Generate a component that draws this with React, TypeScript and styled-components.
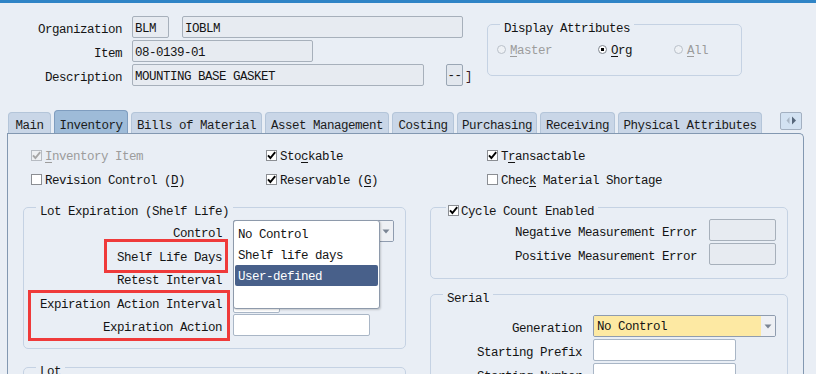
import React from 'react';
import styled, { createGlobalStyle } from 'styled-components';

const PAGE = '#e9eef5';

const GlobalStyle = createGlobalStyle`
  html, body { margin: 0; padding: 0; background: ${PAGE}; }
  body {
    font-family: "Liberation Mono", "DejaVu Sans Mono", monospace;
    font-size: 12.5px;
    letter-spacing: -0.5px;
    color: #141414;
  }
  * { box-sizing: border-box; }
`;

const Screen = styled.div`
  width: 816px;
  height: 374px;
  overflow: hidden;
  background: ${PAGE};
`;

const TopBar = styled.div`
  height: 3px;
  background: #2f84c6;
`;

// header: org / item / description + display attributes
const Header = styled.header`
  display: flex;
  align-items: flex-start;
  height: 107px;
  padding-top: 13px;
`;

const FormGrid = styled.div`
  display: grid;
  grid-template-columns: 122px auto;
  grid-auto-rows: 22px;
  column-gap: 10px;
  row-gap: 2px;
  align-items: center;
  width: 470px;
`;

const Label = styled.span`
  height: 22px;
  padding-top: 5px;
  line-height: 18px;
  text-align: right;
  white-space: nowrap;
`;

const FieldRow = styled.div<{ $gap?: number }>`
  display: flex;
  align-items: center;
  gap: ${p => p.$gap ?? 0}px;
`;

const Field = styled.div<{ $w: number; $tone?: 'read' | 'white' }>`
  width: ${p => p.$w}px;
  height: 22px;
  padding: 3px 2px 0;
  line-height: 19px;
  white-space: nowrap;
  overflow: hidden;
  border: 1px solid ${p => (p.$tone === 'white' ? '#a9b6c6' : '#a7b0bb')};
  border-radius: 2px;
  background: ${p => (p.$tone === 'white' ? '#ffffff' : '#e7ebf1')};
`;

const DotButton = styled.div`
  width: 17px;
  height: 22px;
  padding-top: 3px;
  line-height: 17px;
  text-align: center;
  border: 1px solid #9aa6b4;
  border-radius: 2px;
  background: #e2e7ee;
`;

const Bracket = styled.span`
  margin-left: 2px;
  padding-top: 4px;
  color: #3a1c24;
`;

// group boxes with a title sitting on the top border
const GroupBox = styled.section<{ $w?: number; $h?: number; $pb?: number }>`
  position: relative;
  width: ${p => (p.$w ? `${p.$w}px` : 'auto')};
  height: ${p => (p.$h ? `${p.$h}px` : 'auto')};
  padding-bottom: ${p => p.$pb ?? 0}px;
  border: 1px solid #c5d2e3;
  border-radius: 5px;
`;

const GroupTitle = styled.div<{ $ml?: number; $pl?: number }>`
  display: flex;
  align-items: center;
  gap: 2px;
  width: max-content;
  margin: -3px 0 0 ${p => p.$ml ?? 12}px;
  padding: 0 4px 0 ${p => p.$pl ?? 4}px;
  line-height: 14px;
  background: ${PAGE};
  white-space: nowrap;
`;

const DisplayBox = styled(GroupBox)`
  margin: 8px 0 0 17px;
`;

const RadioRow = styled.div`
  display: grid;
  grid-template-columns: 101px 76px auto;
  margin-top: 8px;
  padding-left: 9px;
  line-height: 14px;
`;

const RadioItem = styled.label<{ $disabled?: boolean }>`
  display: flex;
  align-items: center;
  gap: 4px;
  color: ${p => (p.$disabled ? '#9c9c9c' : '#141414')};
`;

const RadioDot = styled.span<{ $on?: boolean; $disabled?: boolean }>`
  position: relative;
  width: 9px;
  height: 9px;
  margin-top: -3px;
  border-radius: 50%;
  border: 1px solid ${p => (p.$disabled ? '#b9c0c9' : '#7e858e')};
  background: ${p => (p.$disabled ? '#eef1f5' : '#ffffff')};
  &::after {
    content: '';
    display: ${p => (p.$on ? 'block' : 'none')};
    position: absolute;
    left: 2px;
    top: 2px;
    width: 3px;
    height: 3px;
    background: #000;
  }
`;

const Hot = styled.u`
  text-underline-offset: 2px;
`;

// tabs
const TabStrip = styled.nav`
  display: flex;
  align-items: flex-end;
  gap: 3px;
  height: 23px;
  padding-left: 8px;
`;

const Tab = styled.div<{ $w: number; $active?: boolean }>`
  width: ${p => p.$w}px;
  height: ${p => (p.$active ? 23 : 21)}px;
  padding-top: ${p => (p.$active ? 7 : 5)}px;
  line-height: 16px;
  text-align: center;
  white-space: nowrap;
  border: 1px solid ${p => (p.$active ? '#7f9dbf' : '#b4c5d9')};
  border-bottom: 0;
  border-radius: 4px 4px 0 0;
  background: ${p => (p.$active ? '#9ebbd8' : '#c9d6e7')};
  color: #1b1b1b;
`;

const ScrollBtn = styled.div`
  display: flex;
  margin: 0 14px 3px auto;
  width: 22px;
  height: 18px;
  border: 1px solid #a3b0c1;
  border-radius: 2px;
  background: #d3e2f2;
`;

// main panel
const Panel = styled.main`
  margin-left: 7px;
  width: 797px;
  height: 241px;
  overflow: hidden;
  padding: 9px 0 0 15px;
  border: 1px solid #8398b1;
  border-bottom: 0;
  border-top-right-radius: 5px;
`;

const CheckGrid = styled.div`
  display: grid;
  grid-template-columns: 235px 221px auto;
  grid-auto-rows: 24px;
  align-items: center;
  padding-left: 8px;
`;

const CheckItem = styled.label<{ $disabled?: boolean }>`
  display: flex;
  align-items: center;
  gap: 3px;
  padding-top: 3px;
  white-space: nowrap;
  color: ${p => (p.$disabled ? '#9c9c9c' : '#141414')};
`;

const Box = styled.span<{ $disabled?: boolean }>`
  display: flex;
  align-items: center;
  justify-content: center;
  width: 11px;
  height: 11px;
  margin-top: -3px;
  border: 1px solid ${p => (p.$disabled ? '#b6bbc2' : '#8b8e93')};
  background: ${p => (p.$disabled ? '#eef0f3' : '#ffffff')};
`;

const Columns = styled.div`
  display: grid;
  grid-template-columns: 383px 358px;
  column-gap: 24px;
  align-items: start;
  margin-top: 16px;
`;

const Column = styled.div<{ $gap: number }>`
  display: flex;
  flex-direction: column;
  gap: ${p => p.$gap}px;
`;

const FormRows = styled.div<{ $label: number; $gap: number; $row: number; $mt: number }>`
  display: grid;
  grid-template-columns: ${p => p.$label}px auto;
  column-gap: ${p => p.$gap}px;
  row-gap: ${p => p.$row}px;
  grid-auto-rows: 22px;
  align-items: center;
  margin-top: ${p => p.$mt}px;
`;

const Cell = styled.div`
  position: relative;
  display: flex;
`;

const Select = styled.div<{ $w: number }>`
  display: flex;
  width: ${p => p.$w}px;
  height: 22px;
  overflow: hidden;
  border: 1px solid #8f9caf;
  border-radius: 2px;
`;

const SelectValue = styled.span<{ $fill: string }>`
  flex: 1;
  padding: 3px 3px 0;
  line-height: 17px;
  background: ${p => p.$fill};
  white-space: nowrap;
`;

const SelectArrow = styled.span`
  display: flex;
  align-items: center;
  justify-content: center;
  width: 14px;
  background: #eef0f4;
`;

const DropList = styled.ul`
  position: absolute;
  left: 0;
  top: 0;
  z-index: 3;
  width: 147px;
  height: 89px;
  margin: 0;
  padding: 2px 1px 0;
  list-style: none;
  background: #ffffff;
  border: 1px solid #8e9aab;
  border-radius: 3px;
  box-shadow: 1px 1px 2px rgba(0, 0, 0, 0.18);
`;

const DropItem = styled.li<{ $selected?: boolean }>`
  height: 21px;
  padding: 4px 3px 0;
  line-height: 17px;
  border-radius: 2px;
  white-space: nowrap;
  color: ${p => (p.$selected ? '#ffffff' : '#141414')};
  background: ${p => (p.$selected ? '#48608a' : 'transparent')};
`;

// red annotation frames drawn over the screenshot
const Callout = styled.div`
  position: absolute;
  z-index: 2;
  border: 3px solid #ef3a3a;
  pointer-events: none;
`;

function Check({ on, disabled }: { on?: boolean; disabled?: boolean }) {
  return (
    <Box $disabled={disabled}>
      {on && (
        <svg width="9" height="9" viewBox="0 0 9 9">
          <path d="M1 4.3 L3.4 7 L8.2 1.2" fill="none" stroke={disabled ? '#a7a7a7' : '#000'} strokeWidth="1.9" />
        </svg>
      )}
    </Box>
  );
}

function Arrow() {
  return (
    <svg width="8" height="5" viewBox="0 0 8 5">
      <path d="M0.5 0.5 H7.5 L4 4.5 Z" fill="#7b8594" />
    </svg>
  );
}

const tabs = [
  { name: 'Main', w: 43 },
  { name: 'Inventory', w: 74, active: true },
  { name: 'Bills of Material', w: 131 },
  { name: 'Asset Management', w: 124 },
  { name: 'Costing', w: 62 },
  { name: 'Purchasing', w: 80 },
  { name: 'Receiving', w: 75 },
  { name: 'Physical Attributes', w: 144 },
];

export default function App() {
  return (
    <Screen>
      <GlobalStyle />
      <TopBar />
      <Header>
        <FormGrid>
          <Label>Organization</Label>
          <FieldRow $gap={13}>
            <Field $w={37}>BLM</Field>
            <Field $w={281}>IOBLM</Field>
          </FieldRow>
          <Label>Item</Label>
          <Field $w={181}>08-0139-01</Field>
          <Label>Description</Label>
          <FieldRow>
            <Field $w={292}>MOUNTING BASE GASKET</Field>
            <DotButton style={{ marginLeft: 22 }}>--</DotButton>
            <Bracket>]</Bracket>
          </FieldRow>
        </FormGrid>
        <DisplayBox $w={255} $h={52}>
          <GroupTitle>Display Attributes</GroupTitle>
          <RadioRow>
            <RadioItem $disabled>
              <RadioDot $disabled />
              <span><Hot>M</Hot>aster</span>
            </RadioItem>
            <RadioItem>
              <RadioDot $on />
              <span><Hot>O</Hot>rg</span>
            </RadioItem>
            <RadioItem $disabled>
              <RadioDot $disabled />
              <span><Hot>A</Hot>ll</span>
            </RadioItem>
          </RadioRow>
        </DisplayBox>
      </Header>

      <TabStrip>
        {tabs.map(t => (
          <Tab key={t.name} $w={t.w} $active={t.active}>{t.name}</Tab>
        ))}
        <ScrollBtn>
          <svg width="20" height="16" viewBox="0 0 20 16">
            <path d="M8.5 4 V11 L5.5 7.5 Z" fill="#a9b6c5" />
            <path d="M11 3.5 V11.5 L15 7.5 Z" fill="#56667a" />
          </svg>
        </ScrollBtn>
      </TabStrip>

      <Panel>
        <CheckGrid>
          <CheckItem $disabled><Check on disabled /><span><Hot>I</Hot>nventory Item</span></CheckItem>
          <CheckItem><Check on /><span>Sto<Hot>c</Hot>kable</span></CheckItem>
          <CheckItem><Check on /><span>T<Hot>r</Hot>ansactable</span></CheckItem>
          <CheckItem><Check /><span>Revision Control (<Hot>D</Hot>)</span></CheckItem>
          <CheckItem><Check on /><span>Reservable (<Hot>G</Hot>)</span></CheckItem>
          <CheckItem><Check /><span>Chec<Hot>k</Hot> Material Shortage</span></CheckItem>
        </CheckGrid>

        <Columns>
          <Column $gap={18}>
            <GroupBox $pb={12}>
              <GroupTitle>Lot Expiration (Shelf Life)</GroupTitle>
              <FormRows $label={198} $gap={11} $row={1.5} $mt={1}>
                <Label>Control</Label>
                <Cell>
                  <Select $w={161}>
                    <SelectValue $fill="#ffffff" />
                    <SelectArrow><Arrow /></SelectArrow>
                  </Select>
                  <DropList>
                    <DropItem>No Control</DropItem>
                    <DropItem>Shelf life days</DropItem>
                    <DropItem $selected>User-defined</DropItem>
                  </DropList>
                </Cell>
                <Label>Shelf Life Days</Label>
                <Field $w={47} $tone="white" />
                <Label>Retest Interval</Label>
                <Field $w={47} $tone="white" />
                <Label>Expiration Action Interval</Label>
                <Field $w={47} $tone="white" />
                <Label>Expiration Action</Label>
                <Field $w={137} $tone="white" />
              </FormRows>
              <Callout style={{ left: 80, top: 31, width: 124, height: 34 }} />
              <Callout style={{ left: 4, top: 82, width: 202, height: 51 }} />
            </GroupBox>
            <GroupBox $h={60}>
              <GroupTitle>Lot</GroupTitle>
            </GroupBox>
          </Column>

          <Column $gap={15}>
            <GroupBox $pb={13}>
              <GroupTitle $ml={15} $pl={2}>
                <Check on />
                <span>Cycle Count Enabled</span>
              </GroupTitle>
              <FormRows $label={266} $gap={12} $row={2} $mt={0}>
                <Label>Negative Measurement Error</Label>
                <Field $w={67} />
                <Label>Positive Measurement Error</Label>
                <Field $w={67} />
              </FormRows>
            </GroupBox>
            <GroupBox $h={120}>
              <GroupTitle>Serial</GroupTitle>
              <FormRows $label={151} $gap={11} $row={2} $mt={9}>
                <Label>Generation</Label>
                <Select $w={183}>
                  <SelectValue $fill="#fde9a3">No Control</SelectValue>
                  <SelectArrow><Arrow /></SelectArrow>
                </Select>
                <Label>Starting Prefix</Label>
                <Field $w={143} $tone="white" />
                <Label>Starting Number</Label>
                <Field $w={143} $tone="white" />
              </FormRows>
            </GroupBox>
          </Column>
        </Columns>
      </Panel>
    </Screen>
  );
}
